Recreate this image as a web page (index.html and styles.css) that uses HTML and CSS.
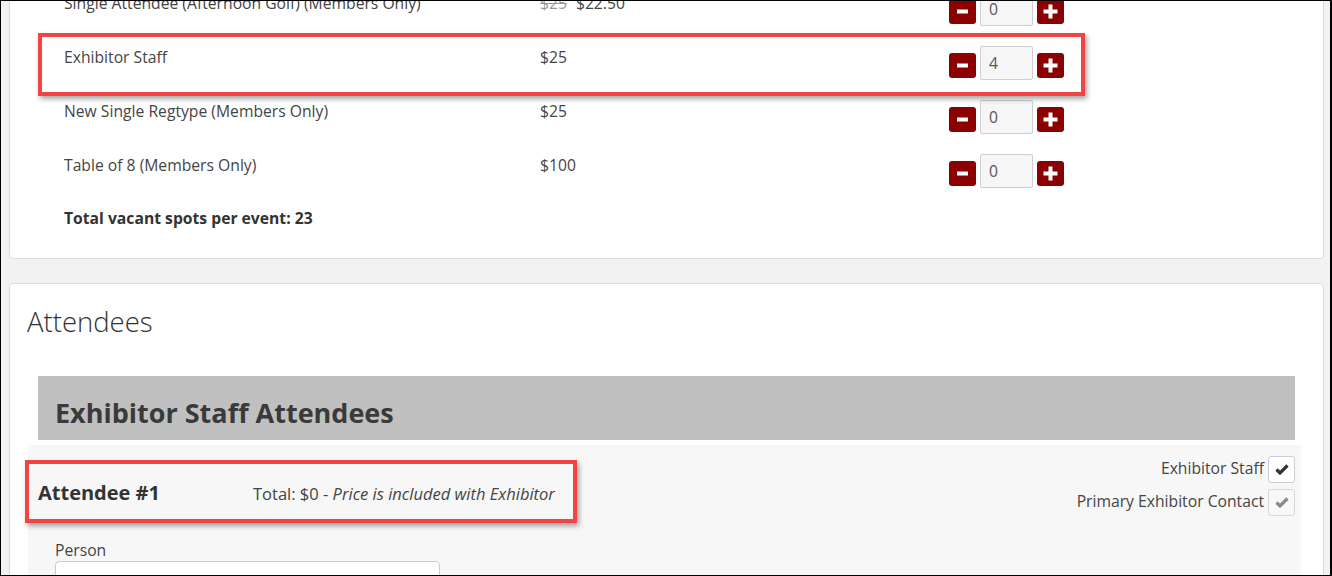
FILE: index.html
```html
<!DOCTYPE html>
<html>
<head>
<meta charset="utf-8">
<link rel="stylesheet" href="styles.css">
</head>
<body>
<div class="frame">
  <div class="inner">
    <div class="card card-tickets">
      <div class="row">
        <div class="name">Single Attendee (Afternoon Golf) (Members Only)</div>
        <div class="price"><s class="old">$25</s>$22.50</div>
        <div class="qty">
          <span class="btn"><svg width="27" height="25" viewBox="0 0 27 25"><rect x="8" y="10.5" width="11" height="4" fill="#fff"/></svg></span>
          <span class="num">0</span>
          <span class="btn"><svg width="27" height="25" viewBox="0 0 27 25"><rect x="6.5" y="10.5" width="14" height="4" fill="#fff"/><rect x="11.5" y="5.5" width="4" height="14" fill="#fff"/></svg></span>
        </div>
      </div>
      <div class="row">
        <div class="name">Exhibitor Staff</div>
        <div class="price">$25</div>
        <div class="qty">
          <span class="btn"><svg width="27" height="25" viewBox="0 0 27 25"><rect x="8" y="10.5" width="11" height="4" fill="#fff"/></svg></span>
          <span class="num">4</span>
          <span class="btn"><svg width="27" height="25" viewBox="0 0 27 25"><rect x="6.5" y="10.5" width="14" height="4" fill="#fff"/><rect x="11.5" y="5.5" width="4" height="14" fill="#fff"/></svg></span>
        </div>
      </div>
      <div class="row">
        <div class="name">New Single Regtype (Members Only)</div>
        <div class="price">$25</div>
        <div class="qty">
          <span class="btn"><svg width="27" height="25" viewBox="0 0 27 25"><rect x="8" y="10.5" width="11" height="4" fill="#fff"/></svg></span>
          <span class="num">0</span>
          <span class="btn"><svg width="27" height="25" viewBox="0 0 27 25"><rect x="6.5" y="10.5" width="14" height="4" fill="#fff"/><rect x="11.5" y="5.5" width="4" height="14" fill="#fff"/></svg></span>
        </div>
      </div>
      <div class="row">
        <div class="name">Table of 8 (Members Only)</div>
        <div class="price">$100</div>
        <div class="qty">
          <span class="btn"><svg width="27" height="25" viewBox="0 0 27 25"><rect x="8" y="10.5" width="11" height="4" fill="#fff"/></svg></span>
          <span class="num">0</span>
          <span class="btn"><svg width="27" height="25" viewBox="0 0 27 25"><rect x="6.5" y="10.5" width="14" height="4" fill="#fff"/><rect x="11.5" y="5.5" width="4" height="14" fill="#fff"/></svg></span>
        </div>
      </div>
      <div class="total-vacant">Total vacant spots per event: 23</div>
    </div>

    <div class="card card-attendees">
      <h3 class="section-title">Attendees</h3>
      <div class="group-bar">Exhibitor Staff Attendees</div>
      <div class="att-panel">
        <div class="att-head">
          <div class="att-title">
            <h4 class="att-name">Attendee #1</h4>
            <div class="att-total">Total: $0 - <em>Price is included with Exhibitor</em></div>
          </div>
          <div class="att-flags">
            <div class="flag">
              <span class="flag-label">Exhibitor Staff</span>
              <span class="check"><svg width="14" height="11" viewBox="0 0 14 11"><path d="M1.5 5.5 L5 9 L12.5 1.5" fill="none" stroke="#333" stroke-width="3.2"/></svg></span>
            </div>
            <div class="flag">
              <span class="flag-label">Primary Exhibitor Contact</span>
              <span class="check check-disabled"><svg width="14" height="11" viewBox="0 0 14 11"><path d="M1.5 5.5 L5 9 L12.5 1.5" fill="none" stroke="#8a8a8a" stroke-width="3.2"/></svg></span>
            </div>
          </div>
        </div>
        <div class="person">
          <div class="person-label">Person</div>
          <div class="person-input"></div>
        </div>
      </div>
    </div>
  </div>
  <div class="callout callout-row"></div>
  <div class="callout callout-att"></div>
</div>
</body>
</html>
```

FILE: styles.css
```css
html, body {
  margin: 0;
  padding: 0;
}
body {
  font-family: "Open Sans", "Liberation Sans", sans-serif;
  font-size: 15.7px;
  color: #444;
  background: #fff;
}
.frame {
  position: relative;
  width: 1332px;
  height: 576px;
  box-sizing: border-box;
  border: 1px solid #000;
  border-right-width: 2px;
  background: #f2f2f2;
  overflow: hidden;
}
.inner {
  padding: 0 6px 0 8px;
}
.card {
  background: #fff;
  border: 1px solid #dcdcdc;
  border-radius: 4px;
}
.card-tickets {
  margin-top: -10px;
  padding: 0 0 29px 0;
}
.row {
  display: grid;
  grid-template-columns: 476px 409px auto;
  height: 54px;
  padding-left: 54px;
  line-height: 22px;
}
.old {
  color: #999;
  margin-right: 9px;
}
.qty {
  display: flex;
  align-items: flex-start;
  gap: 4px;
}
.btn {
  display: block;
  width: 27px;
  height: 25px;
  margin-top: 7px;
  background: #8b0000;
  border-radius: 3px;
}
.btn svg {
  display: block;
}
.num {
  display: block;
  box-sizing: border-box;
  width: 53px;
  height: 34px;
  padding: 6px 0 0 8px;
  background: #f6f6f6;
  border: 1px solid #cfcfcf;
  border-radius: 2px;
  color: #555;
  line-height: 20px;
}
.total-vacant {
  padding-left: 54px;
  margin-top: -1px;
  line-height: 22px;
  font-weight: 700;
  color: #333;
}
.card-attendees {
  margin-top: 24px;
  padding-top: 23px;
  height: 400px;
}
.section-title {
  margin: 0 0 39px 17px;
  font-size: 27.5px;
  line-height: 30px;
  font-weight: 300;
  color: #333;
}
.group-bar {
  margin: 0 28px 0 28px;
  height: 64px;
  box-sizing: border-box;
  padding: 22px 0 0 17px;
  background: #c0c0c0;
  font-size: 27px;
  line-height: 30px;
  font-weight: 700;
  color: #3a3a3a;
}
.att-panel {
  margin: 5px 22px 0 18px;
  background: #f7f7f7;
  height: 200px;
}
.att-head {
  display: flex;
  justify-content: space-between;
  align-items: flex-start;
  padding: 11px 6px 0 10px;
}
.att-title {
  display: flex;
  align-items: baseline;
  margin-top: 25px;
}
.att-name {
  margin: 0;
  width: 215px;
  font-size: 20px;
  line-height: 24px;
  font-weight: 700;
  color: #333;
}
.att-total {
  font-size: 16.5px;
  color: #444;
}
.att-flags {
  display: flex;
  flex-direction: column;
  gap: 6px;
}
.flag {
  display: flex;
  align-items: center;
  justify-content: flex-end;
  gap: 4px;
}
.flag-label {
  line-height: 20px;
  margin-top: -3px;
  color: #444;
}
.check {
  display: flex;
  align-items: center;
  justify-content: center;
  box-sizing: border-box;
  width: 27px;
  height: 27px;
  background: #fff;
  border: 1px solid #c9ced6;
  border-radius: 3px;
}
.check-disabled {
  background: #f8f8f8;
  border-color: #d6d6d6;
}
.person {
  padding: 24px 0 0 27px;
}
.person-label {
  line-height: 21px;
  color: #444;
}
.person-input {
  width: 385px;
  height: 34px;
  box-sizing: border-box;
  background: #fff;
  border: 1px solid #ccc;
  border-radius: 4px;
}
.callout {
  position: absolute;
  box-sizing: border-box;
  border: 4px solid #f24444;
  box-shadow: 2px 3px 5px rgba(0, 0, 0, 0.35);
}
.callout-row {
  left: 37px;
  top: 32px;
  width: 1047px;
  height: 63px;
}
.callout-att {
  left: 24px;
  top: 459px;
  width: 552px;
  height: 63px;
}
```
